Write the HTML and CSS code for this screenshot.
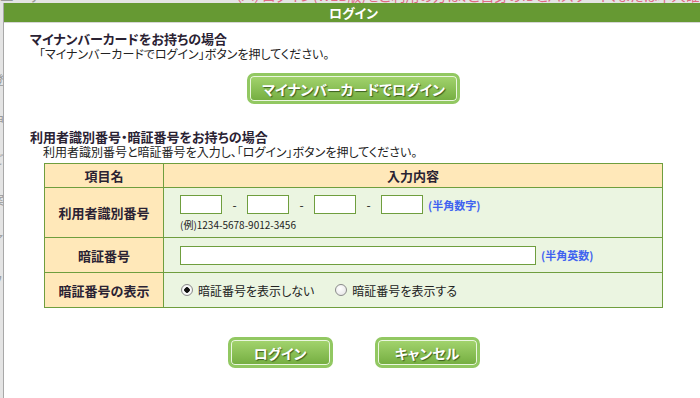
FILE: index.html
```html
<!DOCTYPE html>
<html lang="ja">
<head>
    <meta charset="UTF-8">
    <meta name="viewport" content="width=device-width, initial-scale=1.0">
    <title>ログイン</title>
    <link rel="stylesheet" href="styles.css">
</head>
<body>
    <div class="page">
        <p class="page-line"><span class="page-gray">ユーザー</span><span class="page-red">（ハ）ログイン(WEB版)をご利用の方は、ご自身のIDとパスワード、または本人確認書類をご用意ください</span></p>
        <p class="page-side">登<br>申<br>ご<br>案<br>了<br>フ</p>
    </div>

    <div class="dialog">
        <div class="dialog-title">ログイン</div>
        <div class="dialog-body">
            <h2>マイナンバーカードをお持ちの場合</h2>
            <p class="desc first">「マイナンバーカードでログイン」ボタンを押してください。</p>
            <div class="actions top">
                <button type="button" class="btn wide">マイナンバーカードでログイン</button>
            </div>

            <h2>利用者識別番号・暗証番号をお持ちの場合</h2>
            <p class="desc">利用者識別番号と暗証番号を入力し、「ログイン」ボタンを押してください。</p>
            <table class="login-table">
                <tr class="head">
                    <th class="label">項目名</th>
                    <th>入力内容</th>
                </tr>
                <tr class="row-id">
                    <th class="label">利用者識別番号</th>
                    <td>
                        <div class="id-fields">
                            <input type="text" class="box short" maxlength="4">
                            <span class="dash">-</span>
                            <input type="text" class="box short" maxlength="4">
                            <span class="dash">-</span>
                            <input type="text" class="box short" maxlength="4">
                            <span class="dash">-</span>
                            <input type="text" class="box short" maxlength="4">
                            <span class="note">(半角数字)</span>
                        </div>
                        <div class="example">(例)1234-5678-9012-3456</div>
                    </td>
                </tr>
                <tr class="row-pw">
                    <th class="label">暗証番号</th>
                    <td>
                        <div class="id-fields">
                            <input type="password" class="box long">
                            <span class="note">(半角英数)</span>
                        </div>
                    </td>
                </tr>
                <tr class="row-show">
                    <th class="label">暗証番号の表示</th>
                    <td>
                        <div class="radios">
                            <label><input type="radio" name="show" checked> 暗証番号を表示しない</label>
                            <label><input type="radio" name="show"> 暗証番号を表示する</label>
                        </div>
                    </td>
                </tr>
            </table>

            <div class="actions bottom">
                <button type="button" class="btn">ログイン</button>
                <button type="button" class="btn">キャンセル</button>
            </div>
        </div>
    </div>
</body>
</html>
```

FILE: styles.css
```css
body {
    margin: 0;
    font-family: "Noto Sans CJK JP", "Noto Sans", sans-serif;
    font-feature-settings: "palt";
    background-color: #e4e4e4;
    color: #222;
    overflow: hidden;
    height: 398px;
}
.page {
    position: relative;
    height: 398px;
}
.page-line {
    margin: 0;
    position: absolute;
    top: -12px;
    left: 0;
    white-space: nowrap;
    font-size: 14px;
    line-height: 14px;
}
.page-gray {
    color: #999;
    margin-right: 180px;
}
.page-red {
    color: #e06a84;
}
.page-side {
    position: absolute;
    top: 60px;
    left: -8px;
    margin: 0;
    color: #999;
    font-size: 12px;
    line-height: 40px;
}

/* dialog over the page */
.dialog {
    position: absolute;
    top: 3px;
    left: 3px;
    width: 700px;
    height: 400px;
    box-sizing: border-box;
    background: #fff;
    border-left: 1px solid #a8a8a8;
}
.dialog-title {
    height: 19px;
    line-height: 19px;
    background: #669933; /* green bar */
    color: #fff;
    font-size: 13px;
    font-weight: bold;
    text-align: center;
    border-bottom: 1px solid #d6d6d6;
}
.dialog-body {
    padding: 8px 0 0 0;
}
h2 {
    margin: 0 0 0 26px;
    font-size: 13px;
    line-height: 16px;
    font-weight: bold;
    color: #2a2233;
}
.desc {
    margin: 0 0 0 39px;
    font-size: 12px;
    line-height: 14px;
}
.desc.first {
    margin-left: 35px;
}
.actions {
    display: flex;
    justify-content: center;
}
.actions.top {
    margin: 12px 0 25px;
}
.actions.bottom {
    margin-top: 29px;
    gap: 42px;
}
.btn {
    height: 31px;
    width: 105px;
    padding: 0;
    border: 3px solid #92c862;
    border-radius: 7px;
    background: linear-gradient(#a3d46e, #74ad40);
    box-shadow: inset 0 0 0 1px #eaf6df;
    color: #fff;
    font-family: inherit;
    font-feature-settings: "palt";
    font-size: 14px;
    font-weight: bold;
    text-shadow: 1px 1px 1px #3b5f1f;
    cursor: pointer;
}
.btn.wide {
    width: 213px;
}

/* login table */
.login-table {
    width: 619px;
    margin: 4px auto 0;
    border-collapse: collapse;
    font-size: 12px;
}
.login-table th, .login-table td {
    border: 1px solid #6f9e3e;
    padding: 0;
    background: #ebf5e1;
    text-align: left;
}
.login-table th.label {
    width: 118px;
    background: #ffe8b9;
    text-align: center;
    font-size: 13px;
    color: #2a2233;
}
.login-table tr.head th {
    background: #ffe8b9;
    text-align: center;
    font-size: 13px;
    color: #2a2233;
    height: 23px;
}
.login-table td {
    padding-left: 16px;
}
.row-id th {
    height: 49px;
}
.row-id td {
    vertical-align: top;
    padding-top: 7px;
}
.row-pw th, .row-show th {
    height: 34px;
}
.id-fields {
    display: flex;
    align-items: center;
}
.box {
    height: 19px;
    box-sizing: border-box;
    margin: 0;
    padding: 0 2px;
    border: 1px solid #6f9e3e;
    background: #fff;
    font-size: 12px;
}
.box.short {
    width: 42px;
}
.box.long {
    width: 356px;
}
.dash {
    width: 25px;
    text-align: center;
    font-size: 12px;
}
.note {
    margin-left: 5px;
    color: #3f63f0;
    font-size: 11px;
    font-weight: bold;
}
.example {
    margin-top: 5px;
    font-size: 10px;
    line-height: 12px;
}
.radios {
    display: flex;
    gap: 20px;
    font-size: 12px;
}
.radios label {
    display: flex;
    align-items: center;
}
.radios input {
    appearance: none;
    width: 12px;
    height: 12px;
    margin: 0 5px 0 1px;
    border: 1px solid #8a8a8a;
    border-radius: 50%;
    background: radial-gradient(circle at 40% 35%, #fff, #e2e2e2);
    box-sizing: border-box;
}
.radios input:checked {
    background: radial-gradient(circle, #111 0 2.5px, #fff 3px, #e2e2e2);
}
```
